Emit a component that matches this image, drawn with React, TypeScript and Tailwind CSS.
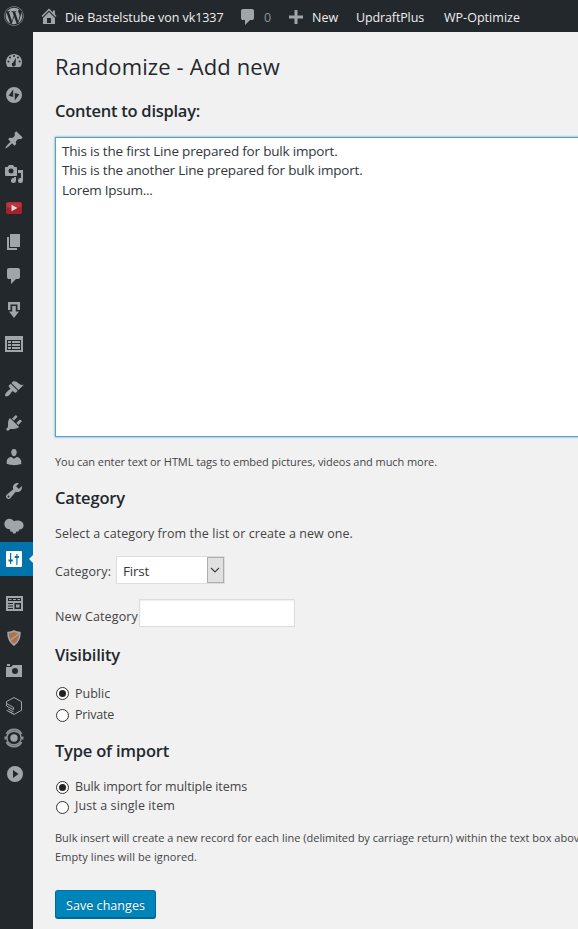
import type { ReactNode } from "react";
import { FaWordpress } from "react-icons/fa";

function Icon({ children, className = "size-5" }: { children: ReactNode; className?: string }) {
  return (
    <svg viewBox="0 0 20 20" className={`${className} shrink-0`} fill="currentColor">
      {children}
    </svg>
  );
}

function MenuItem({ children, active = false }: { children: ReactNode; active?: boolean }) {
  return (
    <li className={`relative flex h-[34px] shrink-0 items-center pl-1 ${active ? "bg-[#0073aa] text-white" : "text-[#a0a5aa]"}`}>
      {children}
      {active && (
        <span className="absolute top-[13px] right-0 border-y-4 border-r-4 border-y-transparent border-r-[#f1f1f1]" />
      )}
    </li>
  );
}

const commentPath =
  "M5 2h9q.82 0 1.41.59T16 4v7q0 .82-.59 1.41T14 13h-2l-5 5v-5H5q-.82 0-1.41-.59T3 11V4q0-.82.59-1.41T5 2z";

function Sidebar() {
  return (
    <ul className="flex w-[33px] shrink-0 flex-col bg-[#23282d] pt-3">
      <MenuItem>
        <Icon className="size-5 -translate-y-px">
          <path
            fillRule="evenodd"
            d="M3.76 17h12.48A7.9 7.9 0 0 0 18 12c0-4.42-3.58-8-8-8s-8 3.58-8 8c0 1.89.66 3.63 1.76 5zM10 5a1 1 0 1 1 0 2 1 1 0 0 1 0-2zM6 6.6a1 1 0 1 1 0 2 1 1 0 0 1 0-2zm8 0a1 1 0 1 1 0 2 1 1 0 0 1 0-2zM4.4 10.4a1 1 0 1 1 0 2 1 1 0 0 1 0-2zm11.2 0a1 1 0 1 1 0 2 1 1 0 0 1 0-2zM12 7.8l-.4 5.8a2 2 0 1 1-2.5-1z"
          />
        </Icon>
      </MenuItem>
      <MenuItem>
        <Icon>
          <path fillRule="evenodd" d="M10 2a8 8 0 1 1 0 16 8 8 0 0 1 0-16zM9.2 4.4L4.6 10.8l4.6 1.3zm1.6 3.5v7.7l4.6-6.4z" />
        </Icon>
      </MenuItem>
      <li className="h-[11px] shrink-0" />
      <MenuItem>
        <Icon>
          <path d="M10.44 3.02l1.82-1.82 6.36 6.35-1.83 1.82c-1.05-.68-2.48-.57-3.41.36l-.75.75c-.92.93-1.04 2.35-.35 3.41l-1.83 1.82-2.41-2.41-2.8 2.79c-.42.42-3.38 2.71-3.8 2.29s1.86-3.39 2.28-3.81l2.79-2.79L4.1 9.36l1.83-1.82c1.05.69 2.48.57 3.4-.36l.75-.75c.93-.92 1.05-2.35.36-3.41z" />
        </Icon>
      </MenuItem>
      <MenuItem>
        <Icon>
          <path
            fillRule="evenodd"
            d="M13 11V4c0-.55-.45-1-1-1h-1.67L9 1H5L3.67 3H2c-.55 0-1 .45-1 1v7c0 .55.45 1 1 1h10c.55 0 1-.45 1-1zM7 4.5a2.5 2.5 0 1 1 0 5 2.5 2.5 0 0 1 0-5zM14 6h5v10.5a2.5 2.5 0 1 1-2-2.45V9h-3V6zm-4 8.05V13h2v3.5a2.5 2.5 0 1 1-2-2.45z"
          />
        </Icon>
      </MenuItem>
      <MenuItem>
        <svg viewBox="0 0 20 20" className="size-5">
          <rect x="2" y="4" width="16" height="12" rx="2" fill="#a5222d" />
          <rect x="2.5" y="4.5" width="15" height="5" rx="1.5" fill="#b93640" />
          <path d="M7.5 6.7v6.6l6-3.3z" fill="#ddd" />
        </svg>
      </MenuItem>
      <MenuItem>
        <Icon><path d="M6 15V2h10v13H6zm-1 1h8v2H3V5h2v11z" /></Icon>
      </MenuItem>
      <MenuItem>
        <Icon><path d={commentPath} /></Icon>
      </MenuItem>
      <MenuItem>
        <Icon><path d="M4 2h12v8h-2.5V4.5h-7V10H4zm4.2 4h3.6v5.5H15L10 18l-5-6.5h3.2z" /></Icon>
      </MenuItem>
      <MenuItem>
        <Icon>
          <path fillRule="evenodd" d="M1 2h18v16H1zm2 4v10h14V6zm1 1h3v2H4zm4 0h8v2H8zM4 10h3v2H4zm4 0h8v2H8zm-4 3h3v2H4zm4 0h8v2H8z" />
        </Icon>
      </MenuItem>
      <li className="h-[11px] shrink-0" />
      <MenuItem>
        <Icon>
          <path d="M14.48 11.06L7.41 3.99l1.5-1.5c.5-.56 2.3-.47 3.51.32 1.21.8 1.43 1.28 2.91 2.1 1.18.64 2.45 1.26 4.45.85zm-.71.71L6.7 4.7 4.93 6.47c-.39.39-.39 1.02 0 1.41l1.06 1.06c.39.39.39 1.03 0 1.42-.6.6-1.43 1.11-2.21 1.69-.35.26-.7.53-1.01.84C1.43 14.23.4 16.08 1.4 17.07c.99 1 2.84-.03 4.18-1.36.31-.31.58-.66.85-1.02.57-.78 1.08-1.61 1.69-2.21.39-.39 1.02-.39 1.41 0l1.06 1.06c.39.39 1.02.39 1.41 0z" />
        </Icon>
      </MenuItem>
      <MenuItem>
        <Icon>
          <path d="M13.11 4.36L9.87 7.6 8 5.73l3.24-3.24c.35-.34 1.05-.2 1.56.32.52.51.66 1.21.31 1.55zm-8 1.77l.91-1.12 9.01 9.01-1.19.84c-.71.71-2.63 1.16-3.82 1.16H6.14L4.9 17.26c-.59.59-1.54.59-2.12 0-.59-.58-.59-1.53 0-2.12l1.24-1.24v-3.88c0-1.13.4-3.19 1.09-3.89zm7.26 3.97l3.24-3.24c.34-.35 1.04-.21 1.55.31.52.51.66 1.21.31 1.55l-3.24 3.25z" />
        </Icon>
      </MenuItem>
      <MenuItem>
        <Icon>
          <path d="M10 9.25c-2.27 0-2.73-3.44-2.73-3.44C7 4.02 7.82 2 9.97 2c2.16 0 2.98 2.02 2.71 3.81 0 0-.41 3.44-2.68 3.44zm0 2.57L12.72 10c2.39 0 4.52 2.33 4.52 4.53v2.49s-3.65 1.13-7.24 1.13c-3.65 0-7.24-1.13-7.24-1.13v-2.49c0-2.25 1.94-4.48 4.47-4.48z" />
        </Icon>
      </MenuItem>
      <MenuItem>
        <Icon>
          <path d="M16.68 9.77c-1.34 1.34-3.3 1.67-4.95.99l-5.41 6.52c-.99.99-2.59.99-3.58 0s-.99-2.59 0-3.57l6.52-5.42c-.68-1.65-.35-3.61.99-4.95 1.28-1.28 3.12-1.62 4.72-1.06l-2.89 2.89 2.82 2.82 2.86-2.87c.53 1.58.18 3.39-1.08 4.65zM3.81 16.21c.4.39 1.04.39 1.43 0 .4-.4.4-1.04 0-1.43-.39-.4-1.03-.4-1.43 0-.39.39-.39 1.03 0 1.43z" />
        </Icon>
      </MenuItem>
      <MenuItem>
        <Icon className="size-5 translate-y-px">
          <path d="M.4 8.5C.2 5.500 2.100 3 5 2.700c2.200-.2 3.900.8 4.900 2.600.9-.6 2.200-.9 3.700-.8 3.700 0 6.100 2.200 6 5-.1 2.500-1.800 4-4.100 4l-1.400 2.300-1.800-.2-.8 2-2.300-.1-.8-1.800-2-.3-.5-2.200C3 13.300.6 11.500.4 8.500z" />
        </Icon>
      </MenuItem>
      <MenuItem active>
        <Icon>
          <path fillRule="evenodd" d="M3 2h14a1 1 0 0 1 1 1v14a1 1 0 0 1-1 1H3a1 1 0 0 1-1-1V3a1 1 0 0 1 1-1zm3 2v6.500H4.500v2H6V15h1.200v-2.500h1.600v-2H7.200V4zm6.300 1v2h-1.600v2h1.600v7h1.200V9H15V7h-1.500V5z" />
        </Icon>
      </MenuItem>
      <li className="h-[11px] shrink-0" />
      <MenuItem>
        <Icon>
          <path fillRule="evenodd" d="M2 2h17v15H2zm2 2v3h13V4zm1 1h2.500v1H5zm4 0h3v1H9zm4.500 0H16v1h-2.500zM4 9v1h5V9zm0 2.500v1h5v-1zM4 14v1h5v-1zm6.500-5v6H17V9zm1.500 1.500h3.500v3H12z" />
        </Icon>
      </MenuItem>
      <MenuItem>
        <svg viewBox="0 0 20 20" className="size-5">
          <path d="M10 3c2 1.1 3.9 1.5 6 1.6 0 5.200-1 9.200-6 12.400-5-3.200-6-7.200-6-12.400C6.100 4.500 8 4.100 10 3z" fill="#b0714a" stroke="#a0a5aa" strokeWidth="1.5" />
          <path d="M5.500 13l9.500-7.500" stroke="#b9a597" strokeWidth="1.100" />
        </svg>
      </MenuItem>
      <MenuItem>
        <Icon className="size-5 -translate-y-px">
          <path fillRule="evenodd" d="M6 5V3H3v2h3zm12 11V4H9L7 6H2v10h16zM11 7a3 3 0 1 1 0 6 3 3 0 0 1 0-6z" />
        </Icon>
      </MenuItem>
      <MenuItem>
        <svg viewBox="0 0 20 20" className="size-5" fill="none" stroke="currentColor" strokeWidth="1">
          <path d="M2.5 10V5.600L10 1.500l7.500 4.200v8.600L10 18.500l-7.500-4.200" />
          <path d="M2.500 7.500l7 3.900v2.200M2.500 10l7 3.700M4 12.900l5.500 3M5.500 15.700l4 2.200" />
        </svg>
      </MenuItem>
      <MenuItem>
        <svg viewBox="0 0 20 20" className="-mt-1 size-5" fill="none" stroke="#8b9094">
          <path d="M2.500 6A8.500 8.500 0 0 1 17.500 6M17.500 14A8.500 8.500 0 0 1 2.500 14" strokeWidth="2" />
          <path d="M.5 9.200H3a7 6 0 0 1 14 0h2.500M.5 10.800H3a7 6 0 0 0 14 0h2.500" strokeWidth="1.400" />
          <circle cx="10" cy="10" r="3.700" fill="#a0a5aa" stroke="none" />
        </svg>
      </MenuItem>
      <MenuItem>
        <Icon className="ml-px size-5">
          <path fillRule="evenodd" d="M10 2a8 8 0 1 1 0 16 8 8 0 0 1 0-16zM8 6v8l5.500-4z" />
        </Icon>
      </MenuItem>
    </ul>
  );
}

function TopBar() {
  return (
    <header className="flex h-8 shrink-0 items-center bg-[#23282d] text-[12.5px] leading-8 whitespace-nowrap text-[#eee]">
      <FaWordpress className="ml-1 size-5 shrink-0 text-[#a0a5aa]" />
      <Icon className="ml-[15px] size-5 text-[#a0a5aa]">
        <path d="M16 8.5l1.53 1.53-1.06 1.06L10 4.6l-6.47 6.49-1.06-1.06L10 2.5l4 4v-2h2v4zm-6-2.46l6 5.99V18H4v-5.97zM12 17v-5H8v5h4z" />
      </Icon>
      <span className="w-[166px] pt-[3px] pl-1.5 tracking-[-0.064px]">Die Bastelstube von vk1337</span>
      <Icon className="ml-[13px] size-5 translate-y-px text-[#a0a5aa]">
        <path d={commentPath} />
      </Icon>
      <span className="w-[28px] pt-[3px] pl-[6px] text-[#8d9297]">0</span>
      <Icon className="size-5 translate-y-px text-[#a0a5aa]">
        <path d="M11.500 8.500H17v3h-5.500V17h-3v-5.500H3v-3h5.500V3h3z" />
      </Icon>
      <span className="w-[50px] pt-[3px] pl-[6px]">New</span>
      <span className="w-[88px] pt-[3px] tracking-[-0.129px]">UpdraftPlus</span>
      <span className="pt-[3px] tracking-[0.030px]">WP-Optimize</span>
    </header>
  );
}

function SectionTitle({ children, className }: { children: ReactNode; className: string }) {
  return (
    <h2 className={`flex h-6 shrink-0 items-center text-[16.5px] font-semibold text-[#23282d] ${className}`}>{children}</h2>
  );
}

function Radio({ checked = false, label, row, dot = "", tracking = "" }: { checked?: boolean; label: string; row: string; dot?: string; tracking?: string }) {
  return (
    <label className={`flex shrink-0 items-center text-[12.5px] ${row}`}>
      <span className={`mr-1.5 ml-px flex size-[13px] shrink-0 items-center justify-center rounded-full border border-[#333] bg-white ${dot}`}>
        {checked && <span className="size-[7px] rounded-full bg-[#222]" />}
      </span>
      <span className={`pt-0.5 ${tracking}`}>{label}</span>
    </label>
  );
}

export default function App() {
  return (
    <div className="flex h-[929px] w-[578px] flex-col overflow-hidden bg-[#f1f1f1] font-['Open_Sans','Noto_Sans',sans-serif] text-[#444]">
      <TopBar />
      <div className="flex min-h-0 flex-1">
        <Sidebar />
        <main className="flex min-w-0 flex-1 flex-col overflow-hidden pl-[22px] whitespace-nowrap">
          <h1 className="mt-[18px] mb-px flex h-8 shrink-0 items-center text-[22px] tracking-[0.130px] text-[#23282d]">Randomize - Add new</h1>
          <SectionTitle className="mt-4 tracking-[-0.259px]">Content to display:</SectionTitle>
          <div className="mt-[14px] h-[300px] w-[560px] shrink-0 border border-[#5b9dd9] bg-white pt-1 pl-1.5 text-[13.5px] leading-[19.5px] tracking-[-0.198px] text-[#32373c] shadow-[0_0_2px_rgba(30,140,190,0.8)]">
            <p>This is the first Line prepared for bulk import.</p>
            <p className="-mt-px">This is the another Line prepared for bulk import.</p>
            <p className="mt-px tracking-[-0.261px]">Lorem Ipsum...</p>
          </div>
          <p className="mt-[15px] flex h-5 shrink-0 items-center text-[11px] tracking-[-0.068px]">
            You can enter text or HTML tags to embed pictures, videos and much more.
          </p>
          <SectionTitle className="mt-[14px] tracking-[-0.154px]">Category</SectionTitle>
          <p className="mt-[14px] flex h-5 shrink-0 items-center text-[12.5px] tracking-[0.072px]">
            Select a category from the list or create a new one.
          </p>
          <div className="mt-3 flex h-7 shrink-0 items-center text-[12.5px]">
            <span className="w-[61px] pt-[5px] tracking-[0.082px]">Category:</span>
            <div className="flex h-7 w-[109px] border border-[#ddd] bg-white">
              <span className="flex-1 pl-1.5 text-[13.5px] leading-[28px] tracking-[-0.228px] text-[#32373c]">First</span>
              <span className="flex w-[17px] items-center justify-center border border-[#adadad] bg-[#e1e1e1]">
                <svg viewBox="0 0 10 6" className="h-1.5 w-2.5 -translate-x-px" fill="none" stroke="#444" strokeWidth="1.2">
                  <path d="M1 1l4 4 4-4" />
                </svg>
              </span>
            </div>
          </div>
          <div className="mt-[15px] flex h-7 shrink-0 items-center text-[12.5px]">
            <span className="w-[84px] pt-[9px] tracking-[0.138px]">New Category</span>
            <div className="h-7 w-[156px] border border-[#ddd] bg-white shadow-[inset_0_1px_2px_rgba(0,0,0,0.07)]" />
          </div>
          <SectionTitle className="mt-4 tracking-[-0.195px]">Visibility</SectionTitle>
          <Radio checked label="Public" row="mt-[16px] h-5" />
          <Radio label="Private" row="mt-[1px] h-5" dot="translate-y-px" tracking="tracking-[-0.208px]" />
          <SectionTitle className="mt-[15px] tracking-[-0.206px]">Type of import</SectionTitle>
          <Radio checked label="Bulk import for multiple items" row="mt-[13px] h-5" dot="translate-y-px" tracking="tracking-[-0.091px]" />
          <Radio label="Just a single item" row="h-[19px]" dot="translate-y-[2px]" tracking="tracking-[0.107px]" />
          <div className="mt-[13px] shrink-0 text-[11px] leading-[19px]">
            <p>
              Bulk insert will create a new record for each line (delimited by carriage return) within the text box above.
            </p>
            <p className="tracking-[0.080px]">Empty lines will be ignored.</p>
          </div>
          <button className="mt-6 flex h-[29px] w-[101px] shrink-0 items-center justify-center rounded-[3px] border border-[#006799] border-t-[#0073aa] bg-[#0085ba] pt-[3px] text-[12.5px] tracking-[0.055px] text-white shadow-[inset_0_-1px_0_#006799] [text-shadow:0_-1px_1px_#006799]">
            Save changes
          </button>
        </main>
      </div>
    </div>
  );
}
